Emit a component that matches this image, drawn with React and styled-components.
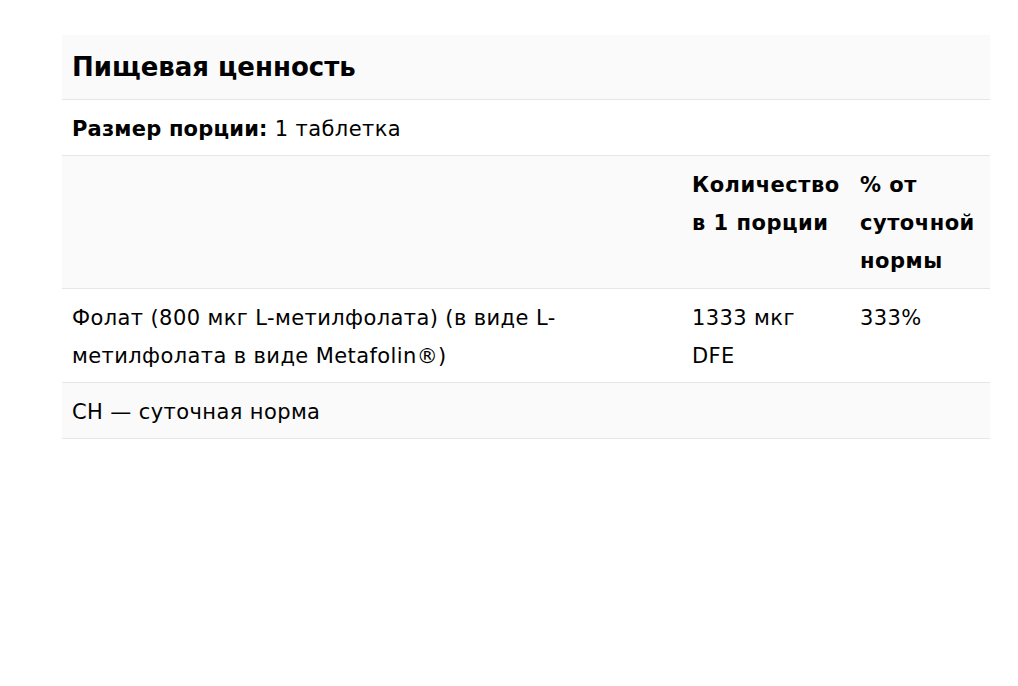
import React from 'react';
import styled, { createGlobalStyle } from 'styled-components';

const GlobalStyle = createGlobalStyle`
	body {
		margin: 0;
		background: #ffffff;
		font-family: "DejaVu Sans", "Liberation Sans", Arial, sans-serif;
		color: #000000;
	}
`;

const Page = styled.div`
	padding: 35px 28px 0 62px;
`;

const Table = styled.table`
	width: 928px;
	border-collapse: collapse;
	table-layout: fixed;
	font-size: 21px;
	line-height: 38px;
`;

const Row = styled.tr`
	background: ${(p) => (p.$shaded ? '#fafafa' : '#ffffff')};
	border-bottom: 1px solid #e6e6e6;
`;

const Cell = styled.td`
	padding: 10px 10px ${(p) => (p.$bold ? '8px' : '7px')};
	vertical-align: top;
	font-weight: ${(p) => (p.$bold ? 700 : 400)};
	letter-spacing: ${(p) => (p.$bold ? '0.5px' : '0.4px')};
`;

const Title = styled.th`
	padding: 9px 10px;
	text-align: left;
	font-size: 26px;
	line-height: 46px;
	font-weight: 700;
`;

const Label = styled.strong`
	font-weight: 700;
	letter-spacing: 0.2px;
`;

const App = () => {
	return (
		<>
			<GlobalStyle />
			<Page>
				<Table>
					<colgroup>
						<col style={{ width: 620 }} />
						<col style={{ width: 168 }} />
						<col style={{ width: 140 }} />
					</colgroup>
					<thead>
						<Row $shaded>
							<Title colSpan={3}>Пищевая ценность</Title>
						</Row>
					</thead>
					<tbody>
						<Row>
							<Cell colSpan={3}>
								<Label>Размер порции:</Label> 1 таблетка
							</Cell>
						</Row>
						<Row $shaded>
							<Cell $bold />
							<Cell $bold>Количество в 1 порции</Cell>
							<Cell $bold>% от суточной нормы</Cell>
						</Row>
						<Row>
							<Cell>Фолат (800 мкг L-метилфолата) (в виде L-метилфолата в виде Metafolin®)</Cell>
							<Cell>1333 мкг DFE</Cell>
							<Cell>333%</Cell>
						</Row>
						<Row $shaded>
							<Cell colSpan={3}>СН — суточная норма</Cell>
						</Row>
					</tbody>
				</Table>
			</Page>
		</>
	);
};

export default App;
